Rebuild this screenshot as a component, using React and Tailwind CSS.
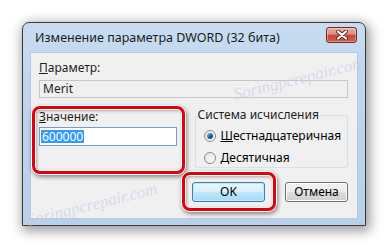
import React from "react";

function Radio({ checked }) {
	return (
		<span className="w-[12px] h-[12px] rounded-full border border-[#8d8d8d] bg-gradient-to-br from-[#e4e4e4] to-[#fbfbfb] flex items-center justify-center shrink-0">
			{checked && (
				<span className="w-[6px] h-[6px] rounded-full bg-gradient-to-br from-[#8ad2fb] via-[#1c6aa6] to-[#0c3d6c]"></span>
			)}
		</span>
	);
}

function Highlight({ className }) {
	return (
		<div
			className={
				"absolute border-[3px] border-[#e2000e] rounded-[8px] shadow-[0_0_0_1px_#ffffff,1px_2px_4px_1px_rgba(0,0,0,0.45),inset_0_0_0_1px_#ffffff,inset_1px_1px_3px_1px_rgba(0,0,0,0.3)] pointer-events-none " +
				className
			}
		></div>
	);
}

function Watermark({ className }) {
	return (
		<span
			className={
				"absolute italic font-['Liberation_Serif',serif] text-[17px] text-[#b7bde3] opacity-45 -rotate-[14deg] whitespace-nowrap pointer-events-none [text-shadow:0_0_1px_#fff] " +
				className
			}
		>
			Soringpcrepair.com
		</span>
	);
}

export default function App() {
	return (
		<div className="w-[389px] h-[249px] bg-white relative overflow-hidden font-['Noto_Sans',sans-serif] text-[12px] text-black">
			{/* Window */}
			<div className="ml-[22px] mt-[22px] w-[344px] h-[204px] rounded-t-[7px] border border-[#3a3a3a] bg-gradient-to-b from-[#c8dcf1] via-[#bcd3eb] to-[#b8d0ea] shadow-[2px_3px_12px_2px_rgba(0,0,0,0.4)] flex flex-col">
				{/* Title bar */}
				<div className="h-[29px] flex items-center justify-between pl-[12px] pr-[8px]">
					<span className="text-[12.5px] text-[#1b1b1b] leading-none mt-[1px]">
						Изменение параметра DWORD (32 бита)
					</span>
					<div className="w-[31px] h-[16px] -mt-[6px] rounded-[3px] border border-[#6d2a22] bg-[linear-gradient(to_bottom,#ebb0a4_0%,#dd8a7c_45%,#c6483a_50%,#cf5e4b_100%)] shadow-[inset_0_0_0_1px_rgba(255,255,255,0.35)] flex items-center justify-center">
						<svg width="12" height="10" viewBox="0 0 12 10">
							<path
								d="M2 1.5 L10 8.5 M10 1.5 L2 8.5"
								stroke="#5a2a22"
								strokeWidth="4"
								strokeLinecap="round"
							/>
							<path
								d="M2 1.5 L10 8.5 M10 1.5 L2 8.5"
								stroke="#ffffff"
								strokeWidth="2.2"
								strokeLinecap="round"
							/>
						</svg>
					</div>
				</div>

				{/* Client area */}
				<div className="relative flex-1 mx-[7px] mb-[6px] bg-[#f0f0f0] border border-[#b4cae2] pt-[7px] pl-[8px] pr-[9px] flex flex-col">
					<div className="leading-[16px] text-[#1e1e1e]">
						<span className="underline">П</span>араметр:
					</div>
					<div className="mt-[4px] h-[18px] border border-[#c3c6cc] bg-[#f0f0f0] flex items-center px-[3px] text-[#1e1e1e]">
						Merit
					</div>

					<div className="mt-[11px] flex gap-[18px]">
						{/* Value */}
						<div className="relative w-[138px] flex flex-col">
							<div className="leading-[16px] text-[#1e1e1e]">
								<span className="underline">З</span>начение:
							</div>
							<div className="mt-[2px] h-[19px] border border-[#7b9cc2] bg-white flex items-center px-[1px]">
								<span className="bg-[#3399ff] text-white leading-[13px] px-[1px]">600000</span>
							</div>
							<Highlight className="-left-[7px] -right-[8px] -top-[3px] -bottom-[6px]" />
						</div>

						{/* Number system */}
						<fieldset className="w-[154px] h-[60px] -mt-[1px] border border-[#d5dfe5] rounded-[3px] pl-[8px]">
							<legend className="-ml-[7px] px-[1px] leading-[14px] text-[#1e1e1e]">
								Система исчисления
							</legend>
							<div className="mt-[6px] flex items-center gap-[5px] leading-[16px]">
								<Radio checked />
								<span>
									<span className="underline">Ш</span>естнадцатеричная
								</span>
							</div>
							<div className="mt-[6px] flex items-center gap-[5px] leading-[16px]">
								<Radio />
								<span>
									<span className="underline">Д</span>есятичная
								</span>
							</div>
						</fieldset>
					</div>

					{/* Buttons */}
					<div className="mt-[14px] flex justify-end gap-[20px]">
						<div className="relative">
							<button className="w-[73px] h-[20px] rounded-[3px] border border-[#3c7fb1] bg-[linear-gradient(to_bottom,#eaf6fd_0%,#d9f0fc_48%,#bee6fd_52%,#a7d9f5_100%)] shadow-[inset_0_0_0_1px_#bfe9fb] text-[12px] leading-none">
								OK
							</button>
							<Highlight className="-left-[10px] -right-[11px] -top-[10px] -bottom-[9px]" />
						</div>
						<button className="w-[63px] h-[20px] rounded-[3px] border border-[#707070] bg-[linear-gradient(to_bottom,#f2f2f2_0%,#ebebeb_48%,#dddddd_52%,#cfcfcf_100%)] shadow-[inset_0_0_0_1px_#fcfcfc] text-[12px] leading-none">
							Отмена
						</button>
					</div>
				</div>
			</div>

			{/* Watermarks */}
			<Watermark className="left-[25px] top-[192px]" />
			<Watermark className="left-[232px] top-[66px] opacity-30" />
		</div>
	);
}
